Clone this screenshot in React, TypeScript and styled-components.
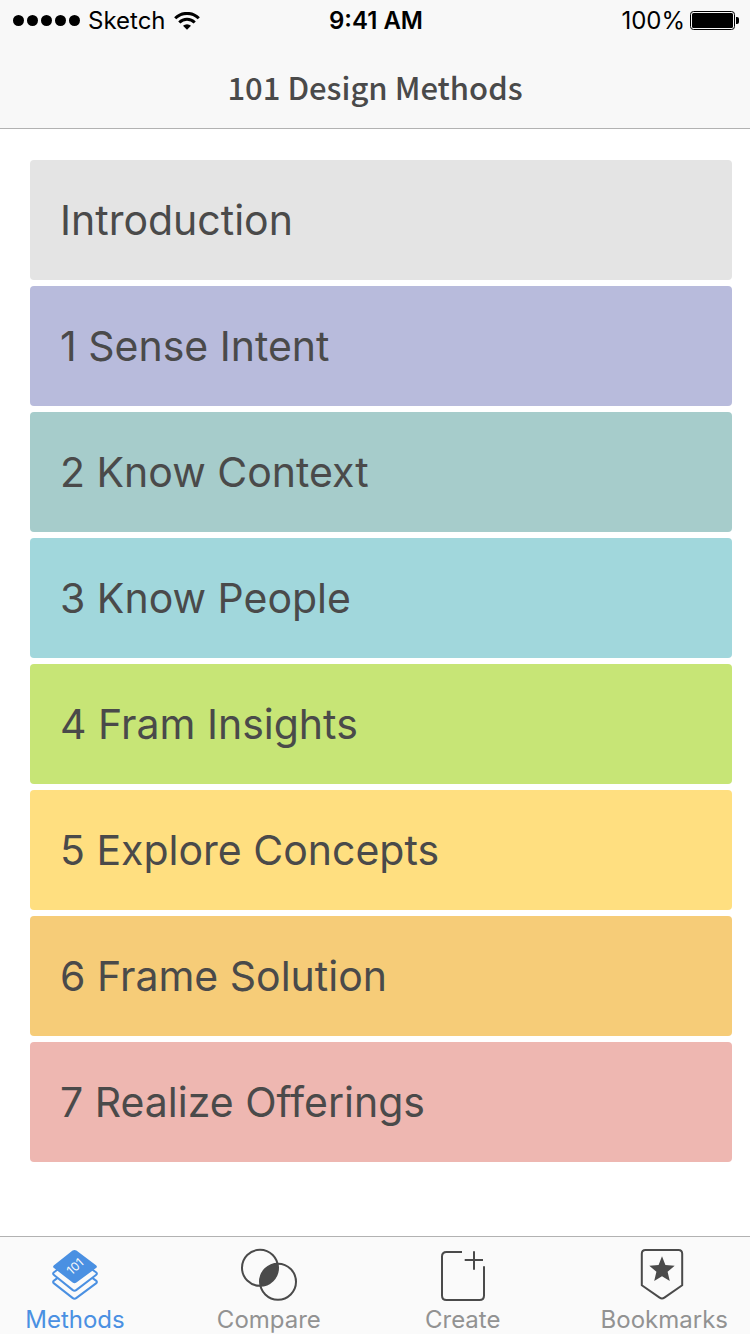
import React from "react";
import styled, { createGlobalStyle } from "styled-components";

const GlobalStyle = createGlobalStyle`
  *, *::before, *::after { box-sizing: border-box; }
  body {
    margin: 0;
    background: #ffffff;
    color: #4a4a4a;
    font-family: Inter, "Liberation Sans", sans-serif;
  }
`;

const Screen = styled.div`
  display: flex;
  flex-direction: column;
  min-height: 100vh;
`;

const Header = styled.header`
  background: #f8f8f8;
  border-bottom: 1px solid #b2b2b2;
`;

const StatusBar = styled.div`
  display: grid;
  grid-template-columns: 1fr auto 1fr;
  align-items: center;
  height: 41px;
  padding: 0 11px 0 13px;
  color: #000000;
  font-size: 24px;
  line-height: 41px;
`;

const StatusGroup = styled.div<{ $end?: boolean; $gap: number }>`
  display: flex;
  align-items: center;
  justify-content: ${(p) => (p.$end ? "flex-end" : "flex-start")};
  gap: ${(p) => p.$gap}px;
`;

const Signal = styled.div`
  display: flex;
  gap: 3px;
`;

const Dot = styled.span`
  width: 11px;
  height: 11px;
  border-radius: 50%;
  background: #000000;
`;

const Clock = styled.time`
  font-weight: 600;
`;

const Title = styled.h1`
  margin: 0;
  padding: 22px 16px 17px;
  text-align: center;
  font-family: "Noto Sans CJK SC", "Noto Sans", sans-serif;
  font-size: 31px;
  font-weight: 500;
  line-height: 48px;
`;

const Content = styled.main`
  flex: 1;
  padding: 31px 18px 64px 30px;
`;

const ChapterList = styled.ul`
  display: flex;
  flex-direction: column;
  gap: 6px;
  margin: 0;
  padding: 0;
  list-style: none;
`;

const ChapterButton = styled.button<{ $color: string }>`
  display: block;
  width: 100%;
  height: 120px;
  padding: 0 30px;
  border: 0;
  border-radius: 4px;
  background: ${(p) => p.$color};
  color: inherit;
  font-family: inherit;
  font-size: 41px;
  line-height: 48px;
  text-align: left;
  cursor: pointer;
`;

const TabBar = styled.nav`
  position: sticky;
  bottom: 0;
  display: flex;
  justify-content: space-between;
  height: 98px;
  padding: 11px 14px 0 11px;
  border-top: 1px solid #b2b2b2;
  background: #fafafa;
`;

const TabLink = styled.a<{ $active?: boolean }>`
  display: flex;
  flex-direction: column;
  align-items: center;
  gap: 4px;
  min-width: 128px;
  padding: 0 8px;
  color: ${(p) => (p.$active ? "#4a90e2" : "#929292")};
  font-size: 24px;
  line-height: 28px;
  text-decoration: none;

  svg {
    flex-shrink: 0;
  }
`;

const WifiIcon = () => (
  <svg width="26" height="18" viewBox="0 0 26 18" fill="none" stroke="#000" aria-hidden="true">
    <path d="M1.2 6.3 A16.6 16.6 0 0 1 24.8 6.3" strokeWidth="3" />
    <path d="M5.3 10.5 A10.9 10.9 0 0 1 20.7 10.5" strokeWidth="3" />
    <path d="M13 17.8 L9 13.8 A5.7 5.7 0 0 1 17 13.8 Z" fill="#000" stroke="none" />
  </svg>
);

const BatteryIcon = () => (
  <svg width="49" height="19" viewBox="0 0 49 19" role="img" aria-label="Battery full">
    <rect x="0.5" y="0.5" width="44" height="18" rx="3" fill="none" stroke="#000" />
    <rect x="2" y="2" width="41" height="15" rx="1.5" />
    <path d="M46 6 H47 Q49 6 49 8 V11 Q49 13 47 13 H46 Z" />
  </svg>
);

const MethodsIcon = () => (
  <svg width="60" height="54" viewBox="0 0 60 54" aria-hidden="true">
    <g fill="#fafafa" stroke="#4a90e2" strokeWidth="2" strokeLinejoin="round">
      <path d="M9 32.6 Q7.2 34 9 35.4 L27.5 49.9 Q29.5 51.4 31.5 49.9 L51 35.4 Q52.8 34 51 32.6 L29.5 17 Z" />
      <path d="M9 24.2 Q7.2 25.6 9 27 L27.5 41.9 Q29.5 43.4 31.5 41.9 L51 27 Q52.8 25.6 51 24.2 L29.5 9 Z" />
    </g>
    <path
      d="M27.6 2.6 Q29.5 1.3 31.4 2.6 L51 17.3 Q52.8 18.7 51 20.1 L31.4 34.6 Q29.5 36 27.6 34.6 L9 20.1 Q7.2 18.7 9 17.3 Z"
      fill="#4a90e2"
    />
    <text
      x="29.5"
      y="23"
      transform="rotate(-43 29.5 18)"
      textAnchor="middle"
      fill="#fafafa"
      fontFamily="Inter, sans-serif"
      fontSize="12"
    >
      101
    </text>
  </svg>
);

const CompareIcon = () => (
  <svg width="60" height="54" viewBox="0 0 60 54" aria-hidden="true">
    <clipPath id="first-circle">
      <circle cx="21" cy="19.8" r="18" />
    </clipPath>
    <circle cx="39" cy="33.8" r="18" fill="#4a4a4a" clipPath="url(#first-circle)" />
    <g fill="none" stroke="#4a4a4a" strokeWidth="2">
      <circle cx="21" cy="19.8" r="18" />
      <circle cx="39" cy="33.8" r="18" />
    </g>
  </svg>
);

const CreateIcon = () => (
  <svg width="60" height="54" viewBox="0 0 60 54" fill="none" stroke="#4a4a4a" strokeWidth="2" aria-hidden="true">
    <path d="M29 4 H13.5 Q9 4 9 8.5 V47.5 Q9 52 13.5 52 H46.5 Q51 52 51 47.5 V18.3" />
    <path d="M41 3.3 V21.8 M31.7 12 H50" />
  </svg>
);

const BookmarksIcon = () => (
  <svg width="60" height="54" viewBox="0 0 60 54" aria-hidden="true">
    <path
      d="M11.5 2 H44.5 Q48.2 2 48.2 5.7 V37.3 L30.4 49.6 Q28 51.2 25.6 49.6 L7.8 37.3 V5.7 Q7.8 2 11.5 2 Z"
      fill="none"
      stroke="#4a4a4a"
      strokeWidth="2"
      strokeLinejoin="round"
    />
    <path
      d="M28 8.3 L31.4 17.1 L40.7 17.7 L33.6 23.7 L35.8 33 L28 28.2 L20.2 33 L22.4 23.7 L15.3 17.7 L24.6 17.1 Z"
      fill="#4a4a4a"
    />
  </svg>
);

const chapters = [
  { name: "Introduction", color: "#e4e4e4" },
  { name: "1 Sense Intent", color: "#b8bbdc" },
  { name: "2 Know Context", color: "#a6cccb" },
  { name: "3 Know People", color: "#a1d7dc" },
  { name: "4 Fram Insights", color: "#c7e576" },
  { name: "5 Explore Concepts", color: "#ffdf80" },
  { name: "6 Frame Solution", color: "#f6cc78" },
  { name: "7 Realize Offerings", color: "#eeb7b1" },
];

const tabs = [
  { name: "Methods", Icon: MethodsIcon },
  { name: "Compare", Icon: CompareIcon },
  { name: "Create", Icon: CreateIcon },
  { name: "Bookmarks", Icon: BookmarksIcon },
];

export default function App() {
  return (
    <Screen>
      <GlobalStyle />
      <Header>
        <StatusBar>
          <StatusGroup $gap={8}>
            <Signal>
              {[1, 2, 3, 4, 5].map((n) => (
                <Dot key={n} />
              ))}
            </Signal>
            <span>Sketch</span>
            <WifiIcon />
          </StatusGroup>
          <Clock>9:41 AM</Clock>
          <StatusGroup $gap={5} $end>
            <span>100%</span>
            <BatteryIcon />
          </StatusGroup>
        </StatusBar>
        <Title>101 Design Methods</Title>
      </Header>
      <Content>
        <ChapterList>
          {chapters.map((chapter) => (
            <li key={chapter.name}>
              <ChapterButton type="button" $color={chapter.color}>
                {chapter.name}
              </ChapterButton>
            </li>
          ))}
        </ChapterList>
      </Content>
      <TabBar aria-label="Sections">
        {tabs.map(({ name, Icon }, i) => (
          <TabLink key={name} href={`#${name.toLowerCase()}`} $active={i === 0} aria-current={i === 0 ? "page" : undefined}>
            <Icon />
            <span>{name}</span>
          </TabLink>
        ))}
      </TabBar>
    </Screen>
  );
}
